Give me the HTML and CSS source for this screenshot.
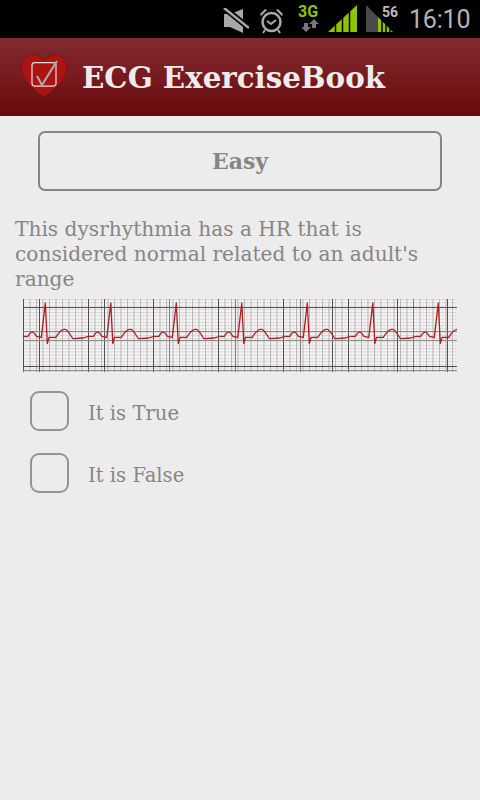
FILE: index.html
```html
<!DOCTYPE html>
<html lang="en">
<head>
<meta charset="utf-8">
<title>ECG ExerciseBook</title>
<link rel="stylesheet" href="styles.css">
</head>
<body>
<div class="status">
  <svg class="st-mute" width="26" height="25" viewBox="0 0 26 25">
    <path d="M1 6h6L20 1v24L7 19H1z" fill="#a8a8a8"/>
    <path d="M0 -1L26 20" stroke="#000" stroke-width="6"/>
    <path d="M1 0L26 20" stroke="#a8a8a8" stroke-width="2.500"/>
  </svg>
  <svg class="st-alarm" width="23" height="26" viewBox="0 0 23 26">
    <circle cx="11.500" cy="14" r="9" fill="none" stroke="#a8a8a8" stroke-width="2.500"/>
    <path d="M0 6l5-5 2 1-6 6zM23 6l-5-5-2 1 6 6z" fill="#a8a8a8"/>
    <path d="M7 13l4 3 5-4" fill="none" stroke="#a8a8a8" stroke-width="2"/>
    <path d="M5 22l-2 3M18 22l2 3" stroke="#a8a8a8" stroke-width="2"/>
  </svg>
  <div class="st-net">
    <span class="st-3g">3G</span>
    <svg class="st-arrows" width="17" height="13" viewBox="0 0 17 13">
      <path d="M2 4h4v4h3l-5 5-5-5h3z" fill="#777"/>
      <path d="M12 0l5 5h-3v4h-4V5H7z" fill="#777"/>
    </svg>
  </div>
  <svg class="st-signal" width="30" height="27" viewBox="0 0 30 27">
    <path d="M0 27L29 0v27z" fill="#8fc400"/>
    <path d="M7.500 27V18M14.500 27V12M21.500 27V5" stroke="#000" stroke-width="1.500"/>
  </svg>
  <div class="st-data">
    <svg width="30" height="27" viewBox="0 0 30 27">
      <path d="M0 0l12 12v15H0z" fill="#4a4a4a"/>
      <path d="M12 12l15 15H12z" fill="#8fc400"/>
      <path d="M16 27V14M20 27V18M24 27V22" stroke="#000" stroke-width="1.500"/>
    </svg>
    <span class="st-56">56</span>
  </div>
  <span class="st-time">16:10</span>
</div>

<header class="appbar">
  <svg class="logo" width="48" height="44" viewBox="0 0 52 46" preserveAspectRatio="none">
    <path d="M26 45C16 38 2 28 1 14 1 5 8 1 14 1c6 0 10 3 12 7 3-4 7-7 12-7 7 0 13 5 13 13C50 28 36 38 26 45z" fill="#ac1414" stroke="#6d1015" stroke-dasharray="2 1"/>
    <rect x="13" y="9" width="26" height="24.500" rx="3" fill="none" stroke="#e4dcdc" stroke-width="1.300"/>
    <path d="M18.400 23l5.400 9.500L40 7.500" fill="none" stroke="#aaa" stroke-width="2.200"/>
  </svg>
  <h1 class="title">ECG ExerciseBook</h1>
</header>

<main class="content">
  <div class="level">Easy</div>
  <p class="question">This dysrhythmia has a HR that is considered normal related to an adult's range</p>
  <svg class="strip" width="434" height="73" viewBox="0 0 434 73">
    <defs>
      <pattern id="minor-h" width="434" height="3.270" patternUnits="userSpaceOnUse">
        <path d="M0 .5H434" stroke="#d8d4d5" stroke-width="1" fill="none"/>
      </pattern>
      <pattern id="minor-v" width="3.250" height="73" patternUnits="userSpaceOnUse">
        <path d="M.5 0V73" stroke="#e4e2e2" stroke-width="1" fill="none"/>
      </pattern>
      <pattern id="mid-v" width="6.500" height="73" patternUnits="userSpaceOnUse">
        <path d="M.5 0V73" stroke="#b8b4b4" stroke-width="1" fill="none"/>
      </pattern>
      <path id="beat" d="M0 37.300H5Q9 29 13.300 37.300L18.300 38.300 22.300 4 24.300 44.700 26 38.300H32.700C36 33 39 30 41.700 30.300 45 30 47 36 50 39.700L60 39 65.500 37.300" fill="none" stroke="#b01c20" stroke-width="1.300" stroke-linejoin="round"/>
    </defs>
    <rect width="434" height="73" fill="#fbfafa"/>
    <rect width="434" height="73" fill="url(#minor-h)"/>
    <rect width="434" height="73" fill="url(#minor-v)"/>
    <rect width="434" height="73" fill="url(#mid-v)"/>
    <path d="M146.500 0V73M212.500 0V73M277.500 0V73M390.500 0V73" stroke="#808080" stroke-width="1"/>
    <path d="M.5 0V73M16.500 0V73M65.500 0V73M81.500 0V73M130.500 0V73M195.500 0V73M260.500 0V73M309.500 0V73M325.500 0V73M374.500 0V73M424.500 0V73" stroke="#505050" stroke-width="1"/>
    <path d="M0 8.500H434M0 67.500H434" stroke="#505050" stroke-width="1"/>
    <path d="M0 32.500H434M0 41.500H434M0 71.500H434" stroke="#8a8a8a" stroke-width="1"/>
    <use href="#beat"/>
    <use href="#beat" x="65.500"/>
    <use href="#beat" x="131"/>
    <use href="#beat" x="196.500"/>
    <use href="#beat" x="262"/>
    <use href="#beat" x="327.500"/>
    <use href="#beat" x="393"/>
  </svg>
  <ul class="options">
    <li class="option"><span class="box"></span><span class="label">It is True</span></li>
    <li class="option"><span class="box"></span><span class="label">It is False</span></li>
  </ul>
</main>
</body>
</html>
```
FILE: styles.css
```css
* { box-sizing: border-box; }
html, body { margin: 0; padding: 0; }
body {
  width: 480px;
  height: 800px;
  overflow: hidden;
  background: #ececec;
  font-family: "DejaVu Serif", "Liberation Serif", serif;
  color: #888486;
}
.status {
  height: 38px;
  background: #000;
  display: flex;
  align-items: flex-start;
  justify-content: flex-end;
  padding: 5px 11px 0 0;
}
.status svg { display: block; flex: none; }
.st-mute { margin: 3px 11px 0 0; }
.st-alarm { margin: 3px 14px 0 0; }
.st-net { width: 22px; display: flex; flex-direction: column; align-items: flex-start; margin-right: 9px; }
.st-3g {
  margin-left: 1px;
  color: #8fc400;
  font: bold 16px/13px "Roboto", sans-serif;
}
.st-arrows { margin: 1px 0 0 5px; }
.st-signal { margin-right: 8px; }
.st-data { position: relative; width: 30px; margin-right: 13px; }
.st-56 {
  position: absolute;
  left: 16px;
  top: 0;
  color: #bbb;
  font: bold 14px/14px "Roboto", sans-serif;
}
.st-time {
  width: 60px;
  white-space: nowrap;
  color: #b4b4b4;
  font: 25px/30px "Roboto", sans-serif;
  letter-spacing: -.2px;
}
.appbar {
  height: 78px;
  background: linear-gradient(#842b30, #680a0c);
  display: flex;
  align-items: flex-start;
  padding: 16px 0 0 20px;
}
.logo { display: block; flex: none; }
.title {
  margin: 6px 0 0 14px;
  color: #ececec;
  font-size: 29.300px;
  line-height: 36px;
  font-weight: bold;
}
.content { padding: 15px 23px 0 15px; }
.level {
  width: 404px;
  height: 60px;
  margin-left: 23px;
  border: 2px solid #888486;
  border-radius: 7px;
  display: flex;
  align-items: center;
  justify-content: center;
  font-size: 22px;
  font-weight: bold;
}
.question {
  margin: 26px 0 0;
  font-size: 20.150px;
  line-height: 25px;
  width: 430px;
}
.strip { display: block; margin: 7px 0 0 8px; }
.options { list-style: none; margin: 19px 0 0 15px; padding: 0; }
.option { display: flex; align-items: center; height: 40px; margin-bottom: 22px; }
.box {
  width: 39px;
  height: 40px;
  border: 2px solid #949494;
  border-radius: 9px;
  flex: none;
}
.label { margin-left: 19px; padding-top: 4px; font-size: 19.600px; }
```
